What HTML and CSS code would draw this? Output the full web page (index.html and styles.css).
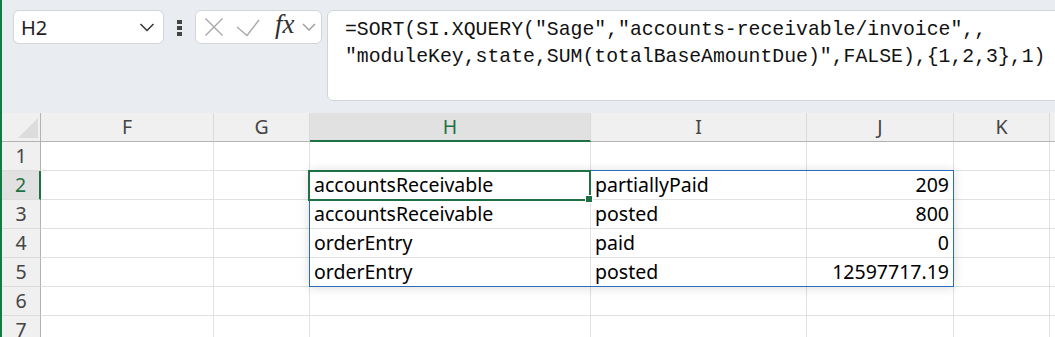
FILE: index.html
```html
<!DOCTYPE html>
<html lang="en">
<head>
    <meta charset="UTF-8">
    <title>Sheet - SI.XQUERY spill</title>
    <link rel="stylesheet" href="styles.css">
</head>
<body>
    <div class="app">
        <div class="toolbar">
            <div class="name-box">
                <span>H2</span>
                <svg width="16" height="10" viewBox="0 0 16 10"><path d="M1.5 2 L8 8.5 L14.5 2" fill="none" stroke="#333" stroke-width="1.5"/></svg>
            </div>
            <div class="grip">
                <span></span><span></span><span></span>
            </div>
            <div class="fx-buttons">
                <svg width="20" height="20" viewBox="0 0 20 20"><path d="M1.5 1.5 L18.5 18.5 M18.5 1.5 L1.5 18.5" fill="none" stroke="#a8a8a8" stroke-width="1.4"/></svg>
                <svg width="27" height="20" viewBox="0 0 27 20"><path d="M1 10 L11 18.5 L23 3" fill="none" stroke="#a8a8a8" stroke-width="1.4"/></svg>
                <span class="fx">fx</span>
                <svg width="14" height="10" viewBox="0 0 14 10"><path d="M1 2 L7 8 L13 2" fill="none" stroke="#999" stroke-width="1.3"/></svg>
            </div>
            <div class="formula">=SORT(SI.XQUERY("Sage","accounts-receivable/invoice",,
"moduleKey,state,SUM(totalBaseAmountDue)",FALSE),{1,2,3},1)</div>
        </div>

        <div class="sheet">
            <div class="grid">
                <div class="corner"></div>
                <div class="hd">F</div>
                <div class="hd">G</div>
                <div class="hd hd-sel">H</div>
                <div class="hd">I</div>
                <div class="hd">J</div>
                <div class="hd">K</div>
                <div class="hd"></div>

                <div class="rh">1</div>
                <div class="c"></div><div class="c"></div><div class="c"></div><div class="c"></div><div class="c"></div><div class="c"></div><div class="c"></div>

                <div class="rh rh-sel">2</div>
                <div class="c"></div><div class="c"></div>
                <div class="c">accountsReceivable</div>
                <div class="c">partiallyPaid</div>
                <div class="c num">209</div>
                <div class="c"></div><div class="c"></div>

                <div class="rh">3</div>
                <div class="c"></div><div class="c"></div>
                <div class="c">accountsReceivable</div>
                <div class="c">posted</div>
                <div class="c num">800</div>
                <div class="c"></div><div class="c"></div>

                <div class="rh">4</div>
                <div class="c"></div><div class="c"></div>
                <div class="c">orderEntry</div>
                <div class="c">paid</div>
                <div class="c num">0</div>
                <div class="c"></div><div class="c"></div>

                <div class="rh">5</div>
                <div class="c"></div><div class="c"></div>
                <div class="c">orderEntry</div>
                <div class="c">posted</div>
                <div class="c num">12597717.19</div>
                <div class="c"></div><div class="c"></div>

                <div class="rh">6</div>
                <div class="c"></div><div class="c"></div><div class="c"></div><div class="c"></div><div class="c"></div><div class="c"></div><div class="c"></div>

                <div class="rh">7</div>
                <div class="c"></div><div class="c"></div><div class="c"></div><div class="c"></div><div class="c"></div><div class="c"></div><div class="c"></div>
            </div>

            <!-- spill range H2:J5 and active cell H2 sit over the grid -->
            <div class="spill"></div>
            <div class="active"><span class="handle"></span></div>
        </div>
    </div>
</body>
</html>
```

FILE: styles.css
```css
html, body {
    margin: 0;
    height: 100%;
    overflow: hidden;
}

body {
    font-family: "Noto Sans", "Open Sans", sans-serif;
    background: #fff;
}

.app {
    height: 100%;
    border-left: 2px solid #107c41;
    overflow: hidden;
}

/* formula bar row */

.toolbar {
    height: 113px;
    box-sizing: border-box;
    display: flex;
    align-items: flex-start;
    padding: 10px 0 0 11px;
    background: #e9edf1;
}

.name-box {
    flex: none;
    width: 151px;
    height: 34px;
    box-sizing: border-box;
    display: flex;
    align-items: center;
    justify-content: space-between;
    padding: 0 8px 0 7px;
    border: 1px solid #d2d4d7;
    border-radius: 6px;
    background: #fff;
    font-size: 20px;
    color: #1f1f1f;
}

.grip {
    flex: none;
    display: flex;
    flex-direction: column;
    gap: 2px;
    margin: 10px 13px 0 13px;
}

.grip span {
    width: 5px;
    height: 4px;
    background: #444;
}

.fx-buttons {
    flex: none;
    width: 127px;
    height: 34px;
    box-sizing: border-box;
    display: flex;
    align-items: center;
    padding: 0 0 0 8px;
    border: 1px solid #d2d4d7;
    border-radius: 6px;
    background: #fff;
}

.fx-buttons svg:nth-child(2) {
    margin-left: 12px;
}

.fx {
    font-family: "Liberation Serif", serif;
    font-style: italic;
    font-size: 27px;
    color: #303030;
    margin: -5px 0 0 12px;
}

.fx-buttons svg:last-child {
    margin-left: 7px;
}

.formula {
    flex: none;
    width: 900px;
    height: 91px;
    box-sizing: border-box;
    margin-left: 5px;
    padding: 6px 0 0 17px;
    border: 1px solid #d2d4d7;
    border-radius: 6px;
    background: #fff;
    font-family: "Liberation Mono", monospace;
    font-size: 19.8px;
    line-height: 27.3px;
    white-space: pre;
    color: #111;
}

/* worksheet */

.sheet {
    position: relative;
}

.grid {
    display: grid;
    grid-template-columns: 39px 173px 96px 281px 216px 147px 96px 1fr;
    grid-auto-rows: 29px;
    font-size: 19.5px;
    line-height: 28px;
}

.corner,
.hd,
.rh,
.c {
    box-sizing: border-box;
    white-space: nowrap;
    overflow: hidden;
}

.corner {
    position: relative;
    background: #f0f0f0;
    border-right: 1px solid #b3b3b3;
    border-bottom: 1px solid #b3b3b3;
}

.corner::after {
    content: "";
    position: absolute;
    right: 2px;
    bottom: 3px;
    border-style: solid;
    border-width: 0 0 20px 20px;
    border-color: transparent transparent #dcdcdc transparent;
}

.hd {
    background: #f0f0f0;
    border-right: 1px solid #d9d9d9;
    border-bottom: 1px solid #b3b3b3;
    text-align: center;
    color: #444;
}

.hd-sel {
    background: #e1e1e1;
    border-bottom: 2px solid #1e7145;
    color: #1e7145;
}

.rh {
    background: #f0f0f0;
    border-right: 1px solid #b3b3b3;
    border-bottom: 1px solid #dcdcdc;
    text-align: center;
    color: #444;
}

.rh-sel {
    background: #e1e1e1;
    border-right: 2px solid #1e7145;
    color: #1e7145;
}

.c {
    padding: 0 4px;
    border-right: 1px solid #e1e1e1;
    border-bottom: 1px solid #e1e1e1;
    color: #000;
}

.num {
    text-align: right;
}

.spill {
    position: absolute;
    left: 307px;
    top: 57px;
    width: 645px;
    height: 117px;
    box-sizing: border-box;
    border: 1px solid #2b6cb8;
    box-shadow: 0 1px 10px rgba(0, 0, 0, 0.14);
    pointer-events: none;
}

.active {
    position: absolute;
    left: 306px;
    top: 57px;
    width: 283px;
    height: 31px;
    box-sizing: border-box;
    border: 2px solid #1e7145;
}

.handle {
    position: absolute;
    right: -4px;
    bottom: -4px;
    width: 6px;
    height: 6px;
    background: #1e7145;
    border: 1px solid #fff;
}
```
